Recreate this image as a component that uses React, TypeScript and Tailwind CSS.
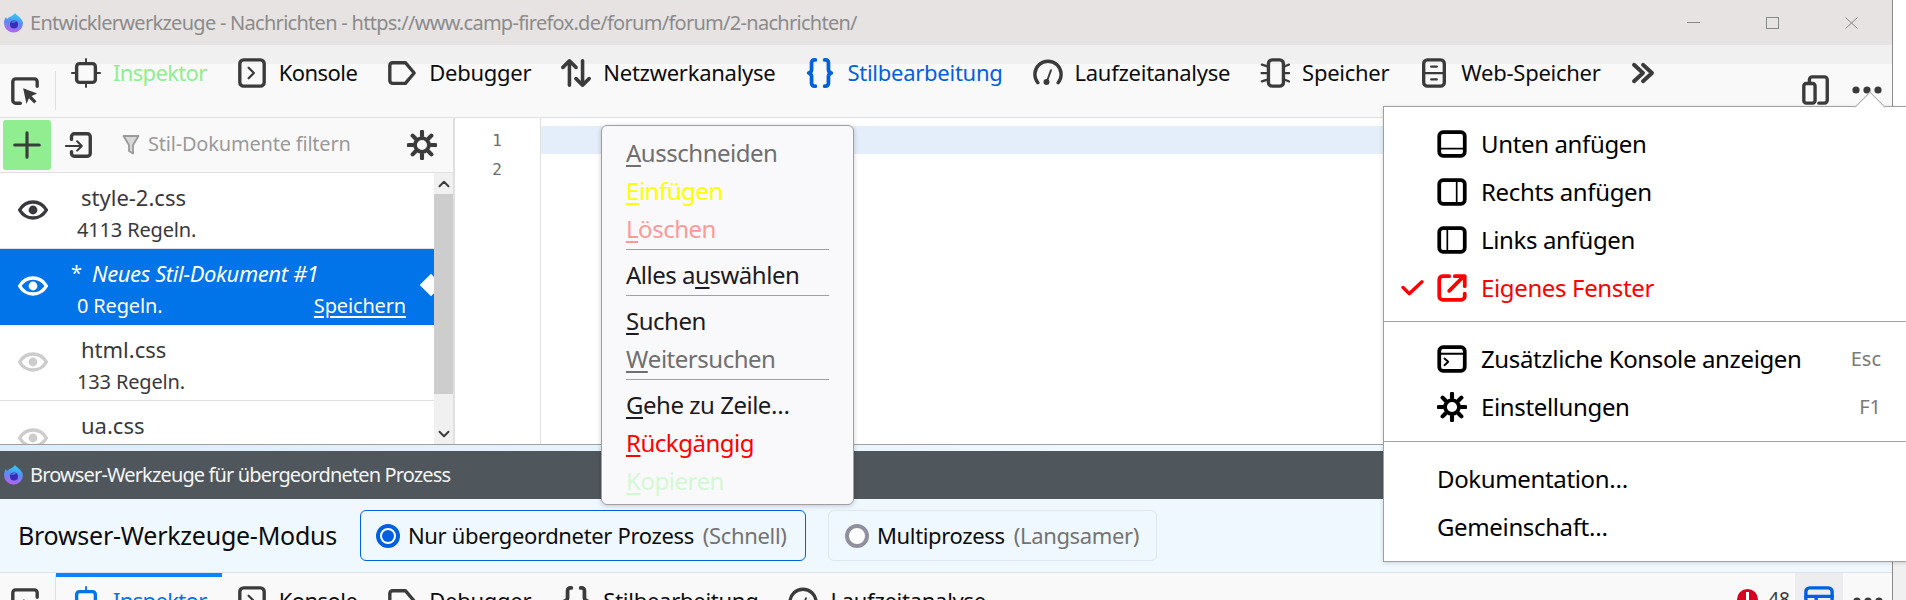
import React from "react";

const Ico = ({ children, cls = "w-[30px] h-[30px]", color = "#3b3b3b", sw = 1.8, box = "0 0 16 16" }: { children: React.ReactNode; cls?: string; color?: string; sw?: number; box?: string }) => (
  <svg viewBox={box} className={cls + " shrink-0"} fill="none" stroke={color} strokeWidth={sw} strokeLinecap="round" strokeLinejoin="round">
    {children}
  </svg>
);

const Pick = () => (
  <Ico>
    <path d="M5.5 14.5H3A1.5 1.5 0 0 1 1.5 13V3A1.5 1.5 0 0 1 3 1.5h10A1.5 1.5 0 0 1 14.5 3v2.5" />
    <path d="M7 6.5l7.5 2.8-3 1.4 2.6 2.8-1.2 1.2-2.8-2.8-1.3 3z" fill="#3b3b3b" stroke="none" />
  </Ico>
);
const Inspector = ({ color = "#3b3b3b" }: { color?: string }) => (
  <Ico color={color}>
    <rect x="3" y="3" width="10" height="10" rx="1.6" />
    <path d="M8 .5V3M8 13v2.5M.5 8H3M13 8h2.5" strokeWidth="1" />
  </Ico>
);
const Konsole = () => (
  <Ico>
    <rect x="1.5" y="1" width="13" height="14" rx="2" />
    <path d="M6.2 5.2L9 8l-2.8 2.8" strokeWidth="1.2" />
  </Ico>
);
const Debugger = () => (
  <Ico>
    <path d="M3 2.5h6.8L14.5 8l-4.7 5.5H3A1.5 1.5 0 0 1 1.5 12V4A1.5 1.5 0 0 1 3 2.5z" />
  </Ico>
);
const Network = () => (
  <Ico sw={1.9}>
    <path d="M4.5 14.5V1.5M1 5l3.5-3.5L8 5" />
    <path d="M11.5 1.500v13M8 11l3.5 3.5L15 11" />
  </Ico>
);
const Braces = ({ color = "#3b3b3b" }: { color?: string }) => (
  <Ico color={color} sw={2}>
    <path d="M5.5 1H5A1.5 1.5 0 0 0 3.500 2.500V6A2 2 0 0 1 2 8a2 2 0 0 1 1.500 2v3.500A1.500 1.500 0 0 0 5 15h.5" />
    <path d="M10.5 1h.5a1.5 1.5 0 0 1 1.5 1.5V6a2 2 0 0 0 1.500 2 2 2 0 0 0-1.500 2v3.500A1.500 1.500 0 0 1 11 15h-.5" />
  </Ico>
);
const Gauge = () => (
  <Ico>
    <path d="M2.6 13.2A7 7 0 1 1 13.4 13.2" />
    <circle cx="7.2" cy="12.8" r="1.6" fill="#3b3b3b" stroke="none" />
    <path d="M7.4 12.5L9.6 6.5" strokeWidth="1" />
  </Ico>
);
const Chip = () => (
  <Ico>
    <rect x="4.5" y="1" width="8" height="14" rx="2" />
    <path d="M1 3.500l3 1M.8 8H4M1 12.500l3-1M13 4.500l2.500-1M13 8h2.500M13 11.500l2.500 1" strokeWidth="1.2" />
  </Ico>
);
const Storage = () => (
  <Ico>
    <rect x="2.5" y="1" width="11" height="14" rx="2" />
    <path d="M2.5 8h11" strokeWidth="1.2" />
    <path d="M6.5 4.600h3M6.500 11.400h3" strokeWidth="1.2" />
  </Ico>
);
const Chevrons = () => (
  <Ico cls="w-[24px] h-[24px]" sw={2.6}>
    <path d="M2 2.500L8 8l-6 5.500M8 2.500L14 8l-6 5.500" />
  </Ico>
);
const Responsive = () => (
  <Ico>
    <path d="M4.5 4V2.500A1.500 1.500 0 0 1 6 1h6.500A1.500 1.500 0 0 1 14 2.500v11a1.500 1.500 0 0 1-1.500 1.500H9.500" />
    <rect x="1.500" y="4.500" width="6" height="10.500" rx="1.300" />
  </Ico>
);
const Dots = () => (
  <svg viewBox="0 0 30 8" className="w-[30px] h-[8px] shrink-0" fill="#3b3b3b">
    <circle cx="4" cy="4" r="3.6" />
    <circle cx="15" cy="4" r="3.6" />
    <circle cx="26" cy="4" r="3.6" />
  </svg>
);
const Gear = ({ color = "#3b3b3b" }: { color?: string }) => (
  <Ico color={color} sw={2}>
    <circle cx="8" cy="8" r="3.700" />
    <path d="M8 .9v2.2M8 12.9v2.2M.9 8h2.2M12.9 8h2.2M3 3l1.5 1.5M11.5 11.5L13 13M13 3l-1.5 1.5M4.5 11.5L3 13" strokeWidth="2.200" />
  </Ico>
);
const Eye = ({ color }: { color: string }) => (
  <svg viewBox="0 0 30 20" className="w-[30px] h-[20px] shrink-0">
    <path d="M15 2C8.5 2 4 6 1.6 10 4 14 8.500 18 15 18s11-4 13.400-8C26 6 21.500 2 15 2z" fill="none" stroke={color} strokeWidth="3.400" />
    <circle cx="15" cy="10" r="4.400" fill={color} />
  </svg>
);

const Logo = ({ id }: { id: string }) => (
  <svg viewBox="0 0 20 20" className="w-[20px] h-[20px] shrink-0">
    <defs>
      <linearGradient id={id} x1="0.500" y1="0" x2="0.300" y2="1">
        <stop offset="0" stopColor="#22d3f5" />
        <stop offset="0.450" stopColor="#5a8cf5" />
        <stop offset="1" stopColor="#c060f0" />
      </linearGradient>
    </defs>
    <path d="M11 0c1 2 7 4.500 8 10a9.500 9.500 0 1 1-19 0c0-3 1-5 2-6 .3 1 .6 1.700 1.200 2C4.500 3.500 9 3.500 11 0z" fill={`url(#${id})`} />
    <circle cx="10" cy="11.500" r="4" fill="#3a2cb4" />
    <path d="M7 9.500a4 4 0 0 1 6 0c-1-.8-2-.5-3 0z" fill="#48a0f5" />
  </svg>
);

const Tab = ({ icon, label, color = "text-[#0c0c0d]", track = "tracking-[-0.012em]" }: { icon: React.ReactNode; label: string; color?: string; track?: string }) => (
  <div className="flex items-center gap-[12px] h-[30px] shrink-0">
    {icon}
    <span className={"whitespace-nowrap text-[22px] pb-[2px] " + track + " " + color}>{label}</span>
  </div>
);

const Mnemonic = ({ u, rest, pre = "", color }: { u: string; rest: string; pre?: string; color: string }) => (
  <div className={"h-[38px] pb-[1px] flex items-center px-[24px] text-[24px] tracking-[-0.02em] whitespace-pre " + color}>
    {pre}
    <span className="underline underline-offset-[3px] decoration-[1.500px]">{u}</span>
    {rest}
  </div>
);

const Sep = () => <div className="h-px mt-px mb-[6px] mx-[24px] bg-[#a0a0a0]" />;

const Row = ({ eye, name, rules, selected, star, save }: { eye: string; name: string; rules: string; selected?: boolean; star?: boolean; save?: boolean }) => (
  <div className={"relative h-[76px] shrink-0 border-b flex pt-[8px] " + (selected ? "bg-[#0074e8] text-white border-[#0074e8]" : "text-[#38383d] border-[#e0e0e2]")}>
    <div className="w-[18px] shrink-0" />
    <div className="mt-[19px] self-start"><Eye color={eye} /></div>
    <div className="ml-[29px] flex-1 flex flex-col">
      <div className="h-[32px] flex items-center text-[22px] whitespace-nowrap">
        {star ? (
          <>
            <span className="-ml-[6px] mr-[10px] text-[20px]">*</span>
            <span className="italic tracking-[-0.018em]">{name}</span>
          </>
        ) : (
          <span className="ml-[4px]">{name}</span>
        )}
      </div>
      <div className="h-[32px] mt-px flex items-center justify-between pr-[28px] text-[20px] tracking-[-0.008em] whitespace-nowrap">
        <span>{rules}</span>
        {save && <span className="underline underline-offset-[3px]">Speichern</span>}
      </div>
    </div>
    {selected && <div className="absolute right-[-5px] top-[28px] w-[16px] h-[16px] rotate-45 bg-white" />}
  </div>
);

const PanelIcon = ({ d, color = "#000" }: { d: string; color?: string }) => (
  <Ico color={color} sw={2}>
    <rect x="1.200" y="1.700" width="13.600" height="12.600" rx="2" />
    <path d={d} strokeWidth="0.9" />
  </Ico>
);

const MenuRow = ({ icon, label, hint, color = "text-black", check }: { icon?: React.ReactNode; label: string; hint?: string; color?: string; check?: boolean }) => (
  <div className={"relative h-[48px] flex items-center pl-[53px] pr-[24px] text-[24px] tracking-[-0.015em] whitespace-nowrap " + color}>
    {check && (
      <svg viewBox="0 0 24 18" className="absolute left-[17px] top-[15px] w-[23px] h-[17px]" fill="none" stroke="#ff0000" strokeWidth="3.600" strokeLinecap="round" strokeLinejoin="round">
        <path d="M2 9l6.500 6.500L22 3" />
      </svg>
    )}
    {icon && <span className="mr-[14px] flex">{icon}</span>}
    <span className="flex-1 pb-[1px]">{label}</span>
    {hint && <span className="text-[20px] text-[#7a7a7a] tracking-normal">{hint}</span>}
  </div>
);

const Radio = ({ on }: { on?: boolean }) =>
  on ? (
    <span className="w-[24px] h-[24px] shrink-0 rounded-full border-[4px] border-[#0060df] bg-white flex items-center justify-center">
      <span className="w-[12px] h-[12px] rounded-full bg-[#0060df]" />
    </span>
  ) : (
    <span className="w-[24px] h-[24px] shrink-0 rounded-full border-[4px] border-[#8f8f9d] bg-white" />
  );

export default function App() {
  return (
    <div className="relative w-[1906px] h-[600px] overflow-hidden flex font-['Noto_Sans',sans-serif] bg-white">
      <div className="w-[1893px] h-[600px] shrink-0 flex flex-col border-r border-[#8a8a8a]">
        {/* title bar */}
        <div className="h-[45px] shrink-0 bg-[#e7e3e2] flex items-center pl-[4px] pr-[34px]">
          <Logo id="logoA" />
          <span className="ml-[6px] flex-1 text-[20px] tracking-[-0.036em] text-[#8b8b8b] whitespace-nowrap">Entwicklerwerkzeuge - Nachrichten - https://www.camp-firefox.de/forum/forum/2-nachrichten/</span>
          <div className="flex items-center gap-[66px]">
            <svg viewBox="0 0 13 12" className="w-[13px] h-[12px]" stroke="#888" fill="none"><path d="M0 5.500h13" /></svg>
            <svg viewBox="0 0 13 12" className="w-[13px] h-[12px]" stroke="#888" fill="none"><rect x=".5" y=".5" width="12" height="11" /></svg>
            <svg viewBox="0 0 13 12" className="w-[13px] h-[12px]" stroke="#888" fill="none"><path d="M.5.5l12 11M12.500.5l-12 11" /></svg>
          </div>
        </div>
        {/* main toolbar */}
        <div className="h-[73px] shrink-0 border-b border-[#e0e0e2] bg-[linear-gradient(#f0f0f0_19px,#f9f9fa_19px)] flex">
          <div className="w-[55px] shrink-0 pl-[10px] pt-[31px]"><Pick /></div>
          <div className="w-px h-[39px] mt-[26px] bg-[#e0e0e2] shrink-0" />
          <div className="flex-1 flex gap-[30px] pl-[15px] pt-[13px]">
            <Tab icon={<Inspector />} label="Inspektor" color="text-[#90ee90]" track="tracking-[-0.03em]" />
            <Tab icon={<Konsole />} label="Konsole" track="tracking-[-0.025em]" />
            <Tab icon={<Debugger />} label="Debugger" />
            <Tab icon={<Network />} label="Netzwerkanalyse" />
            <Tab icon={<Braces color="#0060df" />} label="Stilbearbeitung" color="text-[#0060df]" />
            <Tab icon={<Gauge />} label="Laufzeitanalyse" />
            <Tab icon={<Chip />} label="Speicher" />
            <Tab icon={<Storage />} label="Web-Speicher" />
            <div className="h-[30px] flex items-center"><Chevrons /></div>
          </div>
          <div className="flex items-center gap-[21px] pr-[10px] pt-[30px] self-start">
            <Responsive />
            <Dots />
          </div>
        </div>
        {/* body */}
        <div className="h-[326px] shrink-0 flex overflow-hidden bg-white">
          <div className="w-[455px] shrink-0 border-r-2 border-[#e0e0e2] flex flex-col">
            <div className="h-[55px] shrink-0 border-b border-[#e0e0e2] bg-[#f9f9fa] flex items-center pl-[3px]">
              <div className="w-[48px] h-[50px] rounded-[3px] bg-[#90ee90] flex items-center justify-center">
                <Ico cls="w-[28px] h-[28px]" sw={1.8}><path d="M8 1v14M1 8h14" /></Ico>
              </div>
              <div className="ml-[13px]">
                <Ico>
                  <path d="M4 5V3.500A1.500 1.500 0 0 1 5.500 2h7A1.500 1.500 0 0 1 14 3.500v9a1.500 1.500 0 0 1-1.500 1.500h-7A1.500 1.500 0 0 1 4 12.500V11.500" />
                  <path d="M1 8.500h8.500M7 6l2.500 2.500L7 11" strokeWidth="1.100" />
                </Ico>
              </div>
              <div className="ml-[28px]">
                <svg viewBox="0 0 18 22" className="w-[18px] h-[22px]" fill="#d8d8d8" stroke="#9a9a9a" strokeWidth="1.800" strokeLinejoin="round"><path d="M1.500 2h15L11 11v8.500L7 17V11z" /></svg>
              </div>
              <span className="ml-[8px] flex-1 pb-[2px] text-[20px] tracking-[-0.01em] text-[#9a9a9a] whitespace-nowrap">Stil-Dokumente filtern</span>
              <div className="mr-[16px]"><Gear /></div>
            </div>
            <div className="flex-1 flex min-h-0">
              <div className="flex-1 flex flex-col overflow-hidden">
                <Row eye="#38383d" name="style-2.css" rules="4113 Regeln." />
                <Row eye="#ffffff" name="Neues Stil-Dokument #1" rules="0 Regeln." selected star save />
                <Row eye="#cccccc" name="html.css" rules="133 Regeln." />
                <Row eye="#cccccc" name="ua.css" rules="" />
              </div>
              <div className="w-[19px] shrink-0 bg-[#f0f0f0] flex flex-col">
                <div className="h-[21px] flex items-center justify-center">
                  <Ico cls="w-[12px] h-[12px]" sw={2.600}><path d="M2 11l6-6 6 6" /></Ico>
                </div>
                <div className="h-[200px] bg-[#cdcdcd]" />
                <div className="flex-1" />
                <div className="h-[21px] flex items-center justify-center">
                  <Ico cls="w-[12px] h-[12px]" sw={2.600}><path d="M2 5l6 6 6-6" /></Ico>
                </div>
              </div>
            </div>
          </div>
          <div className="w-[86px] shrink-0 border-r border-[#e0e0e2] pt-[8px] pr-[38px] font-['DejaVu_Sans_Mono',monospace] text-[16px] text-[#6b6b6b] text-right">
            <div className="h-[29px] leading-[29px]">1</div>
            <div className="h-[29px] leading-[29px]">2</div>
          </div>
          <div className="flex-1 pt-[8px]">
            <div className="h-[28px] bg-[#e4eefa]" />
          </div>
        </div>
        {/* stripe */}
        <div className="h-[7px] shrink-0 border-t border-[#a0a0a0] bg-[linear-gradient(90deg,#dcecfa,#f0f8ff_60%)]" />
        {/* dark title */}
        <div className="h-[48px] shrink-0 bg-[#4f565c] flex items-center pl-[4px]">
          <Logo id="logoB" />
          <span className="ml-[6px] text-[20px] tracking-[-0.043em] text-[#f5f5f5] whitespace-nowrap">Browser-Werkzeuge für übergeordneten Prozess</span>
        </div>
        {/* notification */}
        <div className="h-[74px] shrink-0 border-b border-[#dde3e8] bg-[#f0f8ff] flex items-start pt-[11px]">
          <span className="w-[360px] shrink-0 pl-[18px] h-[51px] flex items-center text-[25px] tracking-[-0.01em] text-[#0c0c0d] whitespace-nowrap">Browser-Werkzeuge-Modus</span>
          <div className="w-[446px] h-[51px] shrink-0 rounded-[6px] border border-[#0060df] flex items-center pl-[15px] text-[22px] tracking-[-0.016em] whitespace-nowrap">
            <Radio on />
            <span className="ml-[8px] text-[#0c0c0d]">Nur übergeordneter Prozess</span>
            <span className="ml-[9px] text-[#737373]">(Schnell)</span>
          </div>
          <div className="ml-[22px] w-[329px] h-[51px] shrink-0 rounded-[6px] border border-[#dfe6ee] flex items-center pl-[16px] text-[22px] tracking-[-0.016em] whitespace-nowrap">
            <Radio />
            <span className="ml-[8px] text-[#0c0c0d]">Multiprozess</span>
            <span className="ml-[9px] text-[#737373]">(Langsamer)</span>
          </div>
        </div>
        {/* bottom toolbar */}
        <div className="relative flex-1 min-h-0 bg-[#f9f9fa] overflow-hidden flex">
          <div className="w-[55px] shrink-0 pl-[10px] pt-[14px]"><Pick /></div>
          <div className="w-px h-[39px] mt-[2px] bg-[#e0e0e2] shrink-0" />
          <div className="flex-1 flex gap-[30px] pl-[15px] pt-[13px]">
            <Tab icon={<Inspector color="#0074e8" />} label="Inspektor" color="text-[#0074e8]" track="tracking-[-0.03em]" />
            <Tab icon={<Konsole />} label="Konsole" track="tracking-[-0.025em]" />
            <Tab icon={<Debugger />} label="Debugger" />
            <Tab icon={<Braces />} label="Stilbearbeitung" />
            <Tab icon={<Gauge />} label="Laufzeitanalyse" />
          </div>
          <div className="flex items-start pt-[16px] shrink-0">
            <span className="w-[21px] h-[21px] rounded-full bg-[#d70022] flex justify-center pt-[3px]">
              <span className="w-[3px] h-[12px] bg-white" />
            </span>
            <span className="ml-[10px] mr-[5px] -mt-[4px] text-[19px] leading-[28px] text-[#38383d]">48</span>
          </div>
          <div className="w-[48px] shrink-0 -mb-[4px] bg-[#ededf0] pl-[9px] pt-[13px]">
            <Ico color="#0060df"><rect x="1" y="1" width="14" height="14" rx="2" /><path d="M1 5.500h14M6.500 5.500V15" /></Ico>
          </div>
          <div className="pt-[24px] pl-[10px] pr-[9px]"><Dots /></div>
          <div className="absolute left-[56px] top-0 w-[166px] h-[4px] bg-[#0a84ff]" />
        </div>
      </div>
      <div className="flex-1 bg-[linear-gradient(#ffffff_300px,#f0f0f0_300px)]" />

      {/* context menu */}
      <div className="absolute left-[601px] top-[125px] w-[253px] h-[380px] rounded-[6px] border border-[#a0a0a0] bg-[#f9f9fb] pt-[8px] shadow-[0_1px_5px_rgba(0,0,0,0.2)]">
        <Mnemonic u="A" rest="usschneiden" color="text-[#6f6f6f]" />
        <Mnemonic u="E" rest="infügen" color="text-[#ffff00]" />
        <Mnemonic u="L" rest="öschen" color="text-[#ff9999]" />
        <Sep />
        <Mnemonic pre="Alles a" u="u" rest="swählen" color="text-[#1c1b22]" />
        <Sep />
        <Mnemonic u="S" rest="uchen" color="text-[#1c1b22]" />
        <Mnemonic u="W" rest="eitersuchen" color="text-[#6f6f6f]" />
        <Sep />
        <Mnemonic u="G" rest="ehe zu Zeile…" color="text-[#1c1b22]" />
        <Mnemonic u="R" rest="ückgängig" color="text-[#ff0000]" />
        <Mnemonic u="K" rest="opieren" color="text-[#d4f8d4]" />
      </div>

      {/* options menu */}
      <div className="absolute left-[1383px] top-[106px] w-[530px] h-[456px] border border-[#a0a0a0] bg-white pt-[13px] shadow-[0_1px_4px_rgba(0,0,0,0.15)]">
        <div className="absolute left-[475px] top-[-11px] w-[22px] h-[22px] rotate-45 bg-white border-l border-t border-[#b0b0b0]" />
        <div className="relative pr-[7px]">
          <MenuRow icon={<PanelIcon d="M1 10.500h14" />} label="Unten anfügen" />
          <MenuRow icon={<PanelIcon d="M10.500 1.500v13" />} label="Rechts anfügen" />
          <MenuRow icon={<PanelIcon d="M5.500 1.500v13" />} label="Links anfügen" />
          <MenuRow
            check
            color="text-[#ff0000]"
            icon={
              <Ico color="#ff0000" sw={2}>
                <path d="M6.500 1.700H3A2 2 0 0 0 1.200 3.500v9a2 2 0 0 0 1.800 1.800h10a2 2 0 0 0 1.800-1.800V11" />
                <path d="M6.500 9.500L14 2M9.500 1.700H14.800V7" />
              </Ico>
            }
            label="Eigenes Fenster"
          />
          <div className="h-px mt-[9px] mb-[13px] -mr-[7px] bg-[#a0a0a0]" />
          <MenuRow
            icon={
              <Ico color="#000" sw={2}>
                <rect x="1.200" y="1.700" width="13.600" height="12.600" rx="2" />
                <path d="M1 5.200h14" strokeWidth="1" />
                <path d="M4 7.700L6 9.500 4 11.300" strokeWidth="1" />
              </Ico>
            }
            label="Zusätzliche Konsole anzeigen"
            hint="Esc"
          />
          <MenuRow icon={<Gear color="#000" />} label="Einstellungen" hint="F1" />
          <div className="h-px mt-[10px] mb-[13px] -mr-[7px] bg-[#a0a0a0]" />
          <MenuRow label="Dokumentation…" />
          <MenuRow label="Gemeinschaft…" />
        </div>
      </div>
    </div>
  );
}
